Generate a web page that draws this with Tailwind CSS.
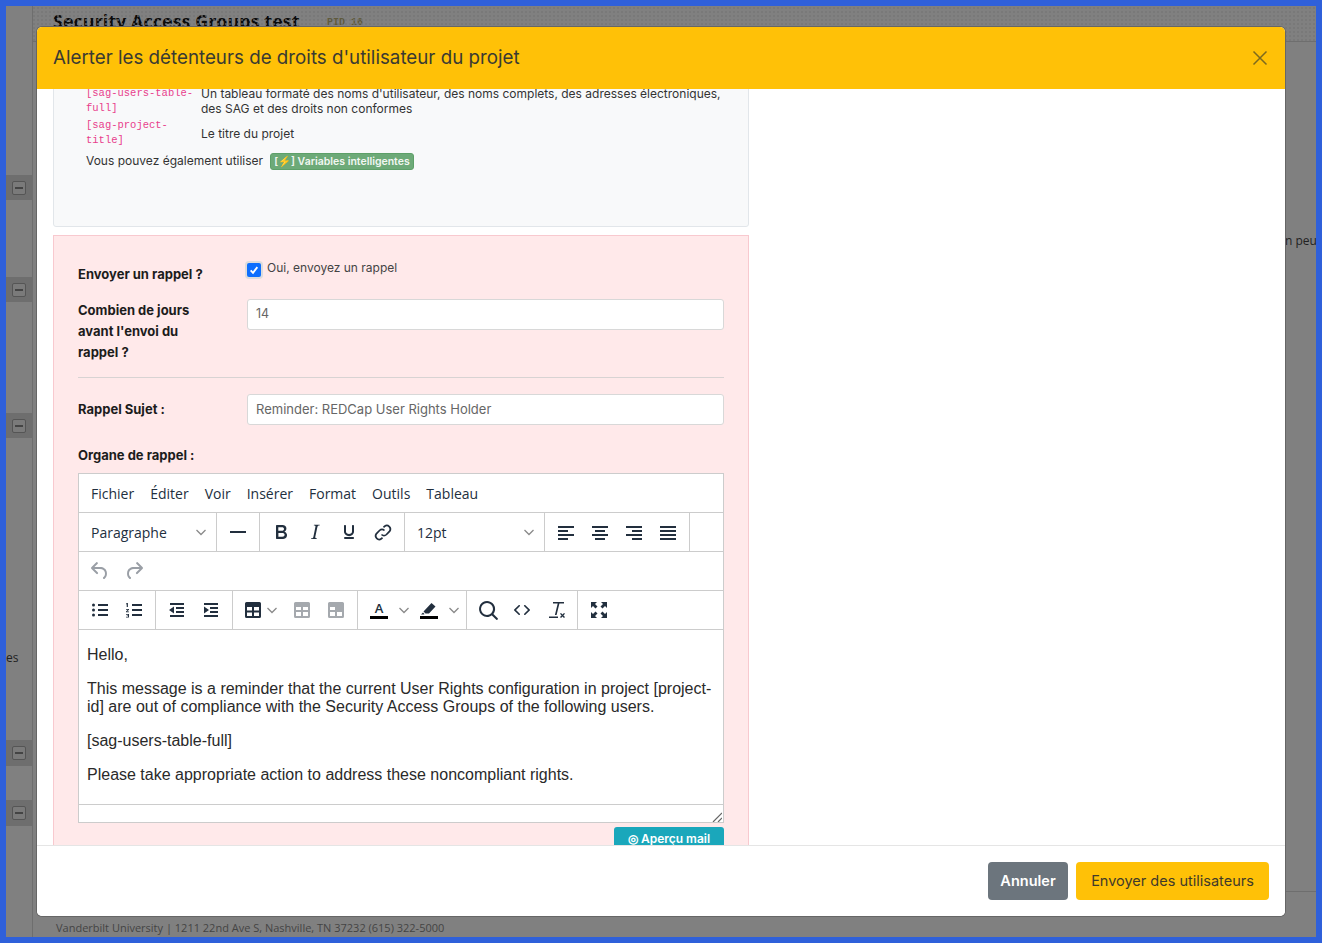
<!DOCTYPE html>
<html lang="fr">
<head>
  <meta charset='utf-8'>
  <meta name='viewport' content='width=device-width,initial-scale=1'>
  <title>Alerter les détenteurs de droits</title>
  <script src="https://cdn.jsdelivr.net/npm/@tailwindcss/browser@4"></script>
</head>
<body class="m-0 overflow-hidden bg-[#2f60da]">
  <div class="h-[943px] w-[1322px] p-[6px] font-['Inter',sans-serif]">
    <!-- dimmed page behind the dialog -->
    <div class="relative h-[931px] w-[1310px] overflow-hidden bg-[#808080]">
      <div class="absolute left-[26px] top-0 bottom-0 w-px bg-[#6e6e6e]"></div>
      <div class="absolute left-[26px] top-[35px] right-0 h-px bg-[#6e6e6e]"></div>
      <div class="absolute left-[47px] top-[3px] font-['Open_Sans',sans-serif] text-[18px] leading-[24px] font-bold text-[#0c0c0c]">Security Access Groups test</div>
      <div class="absolute left-[321px] top-[10px] font-['Liberation_Mono',monospace] text-[10px] leading-[14px] font-bold text-[#5f5a3c]">PID 16</div>
      <div class="absolute left-[26px] right-0 top-0 h-[35px] bg-[radial-gradient(#747474_1px,transparent_1px)] bg-[length:4px_4px] opacity-60"></div>

      <div class="absolute left-0 top-[169px] flex h-[25px] w-[26px] items-center justify-center bg-[#6e6e6e]"><span class="flex h-[14px] w-[14px] items-center justify-center rounded-[2px] border border-[#555] bg-[#7a7a7a]"><span class="h-[2px] w-[8px] bg-[#444]"></span></span></div>
      <div class="absolute left-0 top-[271px] flex h-[25px] w-[26px] items-center justify-center bg-[#6e6e6e]"><span class="flex h-[14px] w-[14px] items-center justify-center rounded-[2px] border border-[#555] bg-[#7a7a7a]"><span class="h-[2px] w-[8px] bg-[#444]"></span></span></div>
      <div class="absolute left-0 top-[407px] flex h-[25px] w-[26px] items-center justify-center bg-[#6e6e6e]"><span class="flex h-[14px] w-[14px] items-center justify-center rounded-[2px] border border-[#555] bg-[#7a7a7a]"><span class="h-[2px] w-[8px] bg-[#444]"></span></span></div>
      <div class="absolute left-0 top-[734px] flex h-[26px] w-[26px] items-center justify-center bg-[#6e6e6e]"><span class="flex h-[14px] w-[14px] items-center justify-center rounded-[2px] border border-[#555] bg-[#7a7a7a]"><span class="h-[2px] w-[8px] bg-[#444]"></span></span></div>
      <div class="absolute left-0 top-[794px] flex h-[26px] w-[26px] items-center justify-center bg-[#6e6e6e]"><span class="flex h-[14px] w-[14px] items-center justify-center rounded-[2px] border border-[#555] bg-[#7a7a7a]"><span class="h-[2px] w-[8px] bg-[#444]"></span></span></div>

      <div class="absolute left-0 top-[644px] font-['Open_Sans',sans-serif] text-[12px] leading-[16px] text-[#222]">es</div>
      <div class="absolute left-[1279px] top-[227px] whitespace-nowrap font-['Open_Sans',sans-serif] text-[12px] leading-[16px] text-[#222]">n peu</div>
      <div class="absolute left-[1279px] right-0 top-[885px] h-px bg-[#6e6e6e]"></div>

      <div class="absolute left-[50px] top-[909px] flex h-[2px] gap-[17px]">
        <span class="h-[2px] w-[126px] bg-black"></span><span class="h-[2px] w-[73px] bg-black"></span><span class="h-[2px] w-[33px] bg-black"></span><span class="h-[2px] w-[33px] bg-black"></span><span class="h-[2px] w-[71px] bg-black"></span><span class="h-[2px] w-[30px] bg-black"></span>
      </div>
      <div class="absolute left-[50px] top-[914px] whitespace-nowrap font-['Open_Sans',sans-serif] text-[11px] leading-[15px] text-[#444]">Vanderbilt University | 1211 22nd Ave S, Nashville, TN 37232 (615) 322-5000</div>

      <!-- dialog -->
      <div class="absolute left-[31px] top-[21px] flex h-[889px] w-[1248px] flex-col overflow-hidden rounded-[5px] bg-white shadow-[0_0_0_1px_#666]">
        <div class="flex h-[62px] shrink-0 items-center justify-between bg-[#ffc107] pl-[16px] pr-[17px]">
          <h5 class="text-[18.75px] leading-[24px] font-normal text-[#3a3a32]">Alerter les détenteurs de droits d'utilisateur du projet</h5>
          <svg class="h-[16px] w-[16px]" viewBox="0 0 16 16" fill="none" stroke="#7d6a1e" stroke-width="1.5"><path d="M1.5 1.5l13 13M14.5 1.5l-13 13"/></svg>
        </div>

        <div class="h-[756px] shrink-0 overflow-hidden px-[16px]">
          <!-- smart variables panel, scrolled -->
          <div class="mt-[-40px] h-[178px] w-[696px] rounded-[3px] border border-[#e2e6ea] bg-[#f8f9fa] pl-[32px] pr-[24px] pt-[35px]">
            <div class="flex h-[32px] items-center">
              <code class="w-[115px] shrink-0 font-['Liberation_Mono',monospace] text-[10.5px] leading-[15px] text-[#e83e8c]">[sag-users-table-full]</code>
              <span class="text-[12px] leading-[15px] text-[#333]">Un tableau formaté des noms d'utilisateur, des noms complets, des adresses électroniques, des SAG et des droits non conformes</span>
            </div>
            <div class="flex h-[32px] items-center">
              <code class="w-[115px] shrink-0 font-['Liberation_Mono',monospace] text-[10.5px] leading-[15px] text-[#e83e8c]">[sag-project-title]</code>
              <span class="text-[12px] leading-[15px] text-[#333]">Le titre du projet</span>
            </div>
            <div class="mt-[3px] flex items-center text-[12px] leading-[18px] text-[#333]">
              Vous pouvez également utiliser
              <span class="ml-[7px] rounded-[3px] border border-[#5da068] bg-[#6daa78] px-[3px] text-[10.5px] leading-[15px] font-semibold text-[#f2f7f2]">[⚡] Variables intelligentes</span>
            </div>
          </div>

          <!-- reminder form -->
          <div class="mt-[8px] h-[640px] w-[696px] border border-[#f8c9cf] bg-[#ffe9ea] px-[24px] pt-[24px]">
            <div class="flex">
              <div class="w-[169px] pt-[4px] text-[13px] leading-[21px] font-bold text-[#1c1c1c]">Envoyer un rappel ?</div>
              <label class="flex items-start text-[12px] leading-[18px] text-[#444]">
                <span class="flex h-[14px] w-[14px] items-center justify-center rounded-[2px] bg-[#0d6efd] shadow-[0_0_0_2px_#dcdcdc] mt-[3px]"><svg class="h-[10px] w-[10px]" viewBox="0 0 12 12" fill="none" stroke="#fff" stroke-width="2.2"><path d="M2 6.5l2.8 3L10 2.5"/></svg></span>
                <span class="ml-[6px] mt-[-1px]">Oui, envoyez un rappel</span>
              </label>
            </div>
            <div class="mt-[14px] flex">
              <div class="w-[169px] pt-[1px] text-[13px] leading-[21px] font-bold text-[#1c1c1c]">Combien de jours<br>avant l'envoi du<br>rappel ?</div>
              <div class="flex h-[31px] w-[477px] items-center rounded-[3px] border border-[#d8d8d8] bg-white px-[8px] text-[12.5px] text-[#666]">14</div>
            </div>
            <div class="mt-[14px] h-px w-[646px] bg-[#d8d3d3]"></div>
            <div class="mt-[16px] flex items-center">
              <div class="w-[169px] text-[13px] leading-[21px] font-bold text-[#1c1c1c]">Rappel Sujet :</div>
              <div class="flex h-[31px] w-[477px] items-center rounded-[3px] border border-[#d8d8d8] bg-white px-[8px] text-[13px] text-[#666]">Reminder: REDCap User Rights Holder</div>
            </div>
            <div class="mt-[20px] text-[13px] leading-[21px] font-bold text-[#1c1c1c]">Organe de rappel :</div>

            <!-- rich text editor -->
            <div class="mt-[7px] w-[646px] border border-[#ccc] bg-white font-['Open_Sans',sans-serif] text-[#222f3e]">
              <div class="flex h-[38px] items-center gap-[16px] pl-[12px] text-[14px]">
                <span>Fichier</span><span>Éditer</span><span>Voir</span><span>Insérer</span><span>Format</span><span>Outils</span><span>Tableau</span>
              </div>
              <!-- row 1 -->
              <div class="flex h-[39px] border-t border-[#ccc]">
                <div class="flex w-[138px] items-center justify-between border-r border-[#ccc] pl-[12px] pr-[10px] text-[14px]">Paragraphe
                  <svg class="h-[10px] w-[10px]" viewBox="0 0 10 10" fill="none" stroke="#8a8a8a" stroke-width="1.3"><path d="M0.5 3l4.5 4.5L9.5 3"/></svg>
                </div>
                <div class="flex w-[43px] items-center justify-center border-r border-[#ccc]"><span class="h-[2px] w-[16px] bg-[#222f3e]"></span></div>
                <div class="flex items-center border-r border-[#ccc] px-[4px]">
                  <span class="flex w-[34px] justify-center"><svg class="h-[24px] w-[24px]" viewBox="0 0 24 24" fill="#222f3e"><path d="M7.8 19c-.3 0-.5 0-.6-.2l-.2-.5V5.7c0-.2 0-.4.2-.5l.6-.2h5c1.5 0 2.7.3 3.5 1 .7.6 1.1 1.4 1.1 2.5a3 3 0 0 1-.6 1.9c-.4.6-1 1-1.6 1.2.4.1.9.3 1.3.6s.8.7 1 1.2c.4.4.5 1 .5 1.6 0 1.3-.4 2.3-1.3 3-.8.7-2.1 1-3.8 1H7.8zm5-8.3c.6 0 1.2-.1 1.6-.5.4-.3.6-.7.6-1.3 0-1.1-.8-1.7-2.3-1.7H9.3v3.5h3.4zm.5 6c.7 0 1.3-.1 1.7-.4.4-.4.6-.9.6-1.5s-.2-1-.7-1.4c-.4-.3-1-.4-2-.4H9.4v3.8h4z"/></svg></span>
                  <span class="flex w-[34px] justify-center"><svg class="h-[24px] w-[24px]" viewBox="0 0 24 24" fill="#222f3e"><path d="M16.7 4.7l-.1.9h-.3c-.6 0-1 0-1.4.3-.3.3-.4.6-.5 1.1l-2.1 9.8v.6c0 .5.4.8 1.4.8h.2l-.2.8H8l.2-.8h.2c1.1 0 1.8-.5 2-1.5l2-9.8.1-.5c0-.6-.4-.8-1.4-.8h-.3l.2-.9h5.8z"/></svg></span>
                  <span class="flex w-[34px] justify-center"><svg class="h-[24px] w-[24px]" viewBox="0 0 24 24" fill="#222f3e"><path d="M16 5c.6 0 1 .4 1 1v5.5a4 4 0 0 1-.4 1.8l-1 1.4a5.3 5.3 0 0 1-5.5 1 5 5 0 0 1-1.6-1c-.5-.4-.8-.9-1.1-1.4a4 4 0 0 1-.4-1.8V6c0-.6.4-1 1-1s1 .4 1 1v5.5c0 .3 0 .6.2 1l.6.7a3.3 3.3 0 0 0 2.2.8 3.4 3.4 0 0 0 2.2-.8c.3-.2.4-.5.6-.8l.2-.9V6c0-.6.4-1 1-1zM8 17h8c.6 0 1 .4 1 1s-.4 1-1 1H8a1 1 0 0 1 0-2z"/></svg></span>
                  <span class="flex w-[34px] justify-center"><svg class="h-[24px] w-[24px]" viewBox="0 0 24 24" fill="none" stroke="#222f3e" stroke-width="1.7"><path d="M10.5 14.5a3.6 3.6 0 0 0 5 0l3.2-3.3a3.6 3.6 0 0 0-5-5l-1.2 1.2"/><path d="M13.5 10.5a3.6 3.6 0 0 0-5 0l-3.2 3.3a3.6 3.6 0 0 0 5 5l1.2-1.2"/></svg></span>
                </div>
                <div class="flex w-[140px] items-center justify-between border-r border-[#ccc] pl-[12px] pr-[10px] text-[14px]">12pt
                  <svg class="h-[10px] w-[10px]" viewBox="0 0 10 10" fill="none" stroke="#8a8a8a" stroke-width="1.3"><path d="M0.5 3l4.5 4.5L9.5 3"/></svg>
                </div>
                <div class="flex items-center border-r border-[#ccc] px-[4px]">
                  <span class="flex w-[34px] justify-center"><svg class="h-[24px] w-[24px]" viewBox="0 0 24 24" fill="#222f3e"><path d="M4 6h16v2H4zM4 10h10v2H4zM4 14h16v2H4zM4 18h10v2H4z"/></svg></span>
                  <span class="flex w-[34px] justify-center"><svg class="h-[24px] w-[24px]" viewBox="0 0 24 24" fill="#222f3e"><path d="M4 6h16v2H4zM7 10h10v2H7zM4 14h16v2H4zM7 18h10v2H7z"/></svg></span>
                  <span class="flex w-[34px] justify-center"><svg class="h-[24px] w-[24px]" viewBox="0 0 24 24" fill="#222f3e"><path d="M4 6h16v2H4zM10 10h10v2H10zM4 14h16v2H4zM10 18h10v2H10z"/></svg></span>
                  <span class="flex w-[34px] justify-center"><svg class="h-[24px] w-[24px]" viewBox="0 0 24 24" fill="#222f3e"><path d="M4 6h16v2H4zM4 10h16v2H4zM4 14h16v2H4zM4 18h16v2H4z"/></svg></span>
                </div>
              </div>
              <!-- row 2 -->
              <div class="flex h-[39px] items-center border-t border-[#ccc] px-[4px]">
                <span class="flex w-[34px] justify-center"><svg class="h-[24px] w-[24px]" viewBox="0 0 24 24" fill="#9a9fa6"><path d="M6.4 8H12c3.7 0 6.2 2 6.8 5.1.6 2.7-.4 5.6-2.3 6.8a1 1 0 0 1-1-1.8c1.1-.7 1.8-2.7 1.4-4.6-.5-2.1-2.1-3.5-4.9-3.5H6.4l3.3 3.3a1 1 0 1 1-1.4 1.4l-5-5a1 1 0 0 1 0-1.4l5-5a1 1 0 0 1 1.4 1.4L6.4 8z"/></svg></span>
                <span class="flex w-[34px] justify-center"><svg class="h-[24px] w-[24px] -scale-x-100" viewBox="0 0 24 24" fill="#9a9fa6"><path d="M6.4 8H12c3.7 0 6.2 2 6.8 5.1.6 2.7-.4 5.6-2.3 6.8a1 1 0 0 1-1-1.8c1.1-.7 1.8-2.7 1.4-4.6-.5-2.1-2.1-3.5-4.9-3.5H6.4l3.3 3.3a1 1 0 1 1-1.4 1.4l-5-5a1 1 0 0 1 0-1.4l5-5a1 1 0 0 1 1.4 1.4L6.4 8z"/></svg></span>
              </div>
              <!-- row 3 -->
              <div class="flex h-[39px] border-t border-[#ccc]">
                <div class="flex items-center border-r border-[#ccc] px-[4px]">
                  <span class="flex w-[34px] justify-center"><svg class="h-[24px] w-[24px]" viewBox="0 0 24 24" fill="#222f3e"><path d="M10 6h10v2H10zM10 11h10v2H10zM10 16h10v2H10z"/><circle cx="5.5" cy="7" r="1.5"/><circle cx="5.5" cy="12" r="1.5"/><circle cx="5.5" cy="17" r="1.5"/></svg></span>
                  <span class="flex w-[34px] justify-center"><svg class="h-[24px] w-[24px]" viewBox="0 0 24 24" fill="#222f3e"><path d="M10 6h10v2H10zM10 11h10v2H10zM10 16h10v2H10zM4.5 5h1.4v4H4.7V6.200H4zM4 11h3v.8l-1.800 1.700H7v.8H4v-.8l1.800-1.700H4zM4 16h3v3.500H4v-.8h2v-.6H4.800v-.7H6v-.6H4z"/></svg></span>
                </div>
                <div class="flex items-center border-r border-[#ccc] px-[4px]">
                  <span class="flex w-[34px] justify-center"><svg class="h-[24px] w-[24px]" viewBox="0 0 24 24" fill="#222f3e"><path d="M5 5h14v2H5zM11 9h8v2h-8zM11 13h8v2h-8zM5 17h14v2H5zM9 8.500v7L4 12z"/></svg></span>
                  <span class="flex w-[34px] justify-center"><svg class="h-[24px] w-[24px]" viewBox="0 0 24 24" fill="#222f3e"><path d="M5 5h14v2H5zM11 9h8v2h-8zM11 13h8v2h-8zM5 17h14v2H5zM5 8.500v7L10 12z"/></svg></span>
                </div>
                <div class="flex items-center border-r border-[#ccc] pl-[3px] pr-[4px]">
                  <span class="flex w-[49px] items-center pl-[5px]"><svg class="h-[24px] w-[24px] shrink-0" viewBox="0 0 24 24" fill="#222f3e"><path fill-rule="evenodd" d="M5.500 4h13A1.500 1.500 0 0 1 20 5.500v13a1.500 1.500 0 0 1-1.500 1.500h-13A1.500 1.500 0 0 1 4 18.500v-13A1.500 1.500 0 0 1 5.500 4zM6 9v3.500h5V9zm7 0v3.500h5V9zM6 14.500V18h5v-3.500zm7 0V18h5v-3.500z"/></svg><svg class="ml-[2px] h-[10px] w-[10px]" viewBox="0 0 10 10" fill="none" stroke="#8a8a8a" stroke-width="1.3"><path d="M0.500 3l4.500 4.500L9.500 3"/></svg></span>
                  <span class="flex w-[34px] justify-center"><svg class="h-[24px] w-[24px]" viewBox="0 0 24 24" fill="#a5a9ae"><path fill-rule="evenodd" d="M5.500 4h13A1.500 1.500 0 0 1 20 5.500v13a1.500 1.500 0 0 1-1.500 1.500h-13A1.500 1.500 0 0 1 4 18.500v-13A1.500 1.500 0 0 1 5.500 4zM6 9v3h5V9zm7 0v3h5V9zM6 14v4h5v-4zm7 0v4h5v-4z"/></svg></span>
                  <span class="flex w-[34px] justify-center"><svg class="h-[24px] w-[24px]" viewBox="0 0 24 24" fill="#a5a9ae"><path fill-rule="evenodd" d="M5.500 4h13A1.500 1.500 0 0 1 20 5.500v13a1.500 1.500 0 0 1-1.500 1.500h-13A1.500 1.500 0 0 1 4 18.500v-13A1.500 1.500 0 0 1 5.500 4zM6 9v3h5V9zM6 14v4h5v-4zm7 0v4h5v-4z"/></svg></span>
                </div>
                <div class="flex items-center border-r border-[#ccc] pl-[4px] pr-[4px]">
                  <span class="flex w-[50px] items-center pl-[5px]"><span class="flex w-[24px] flex-col items-center"><span class="text-[13px] leading-[13px] font-semibold">A</span><span class="mt-[1px] h-[3px] w-[18px] bg-black"></span></span><svg class="ml-[8px] h-[10px] w-[10px]" viewBox="0 0 10 10" fill="none" stroke="#8a8a8a" stroke-width="1.3"><path d="M0.500 3l4.500 4.500L9.500 3"/></svg></span>
                  <span class="flex w-[50px] items-center pl-[5px]"><span class="flex w-[24px] flex-col items-center"><svg class="h-[13px] w-[18px]" viewBox="0 0 18 13" fill="#222f3e"><path d="M11.500 1l4 3.500-6.500 7H5.500L3.500 9.500zM1 12.500l2-2 1.500 1.500-.5.500z"/></svg><span class="mt-[1px] h-[3px] w-[18px] bg-black"></span></span><svg class="ml-[8px] h-[10px] w-[10px]" viewBox="0 0 10 10" fill="none" stroke="#8a8a8a" stroke-width="1.3"><path d="M0.500 3l4.500 4.500L9.500 3"/></svg></span>
                </div>
                <div class="flex items-center border-r border-[#ccc] px-[4px]">
                  <span class="flex w-[34px] justify-center"><svg class="h-[24px] w-[24px]" viewBox="0 0 24 24" fill="#222f3e"><path d="M16 17.300a8 8 0 1 1 1.400-1.400l4.300 4.400a1 1 0 0 1-1.400 1.400l-4.400-4.300zm-5-.3a6 6 0 1 0 0-12 6 6 0 0 0 0 12z"/></svg></span>
                  <span class="flex w-[34px] justify-center"><svg class="h-[24px] w-[24px]" viewBox="0 0 24 24" fill="#222f3e"><path d="M9.800 15.700c.3.300.3.800 0 1-.3.400-.9.400-1.200 0l-4.400-4.100a.8.800 0 0 1 0-1.200l4.400-4.200c.3-.3.900-.3 1.200 0 .3.300.3.800 0 1.100L6 12l3.800 3.700zm4.400 0L18 12l-3.800-3.700a.7.700 0 0 1 0-1.100c.3-.3.900-.3 1.200 0l4.400 4.200c.3.300.3.900 0 1.200l-4.400 4.100c-.3.400-.9.400-1.200 0a.8.800 0 0 1 0-1z"/></svg></span>
                  <span class="flex w-[34px] justify-center"><svg class="h-[24px] w-[24px]" viewBox="0 0 24 24" fill="#222f3e"><path d="M9 4h11v1.600h-4.600L12.600 17h-1.700l2.800-11.400H9zM5 18.500h9V20H5zM16 15.800l1-.9 1.500 1.500 1.500-1.500 1 .9-1.600 1.600 1.600 1.600-1 .9-1.500-1.500-1.500 1.500-1-.9 1.600-1.600z"/></svg></span>
                </div>
                <div class="flex items-center px-[4px]">
                  <span class="flex w-[34px] justify-center"><svg class="h-[24px] w-[24px]" viewBox="0 0 24 24" fill="#222f3e"><path d="M4 4h6l-2 2 2.500 2.500-2 2L6 8l-2 2zM20 4v6l-2-2-2.500 2.500-2-2L16 6l-2-2zM4 20v-6l2 2 2.500-2.500 2 2L8 18l2 2zM20 20h-6l2-2-2.500-2.500 2-2L18 16l2-2z"/></svg></span>
                </div>
              </div>
              <!-- content -->
              <div class="h-[175px] border-t border-[#ccc] px-[8px] pt-[16px] font-['Liberation_Sans',sans-serif] text-[16px] leading-[18px] text-[#2a2a2a]">
                <p>Hello,</p>
                <p class="mt-[16px]">This message is a reminder that the current User Rights configuration in project [project-id] are out of compliance with the Security Access Groups of the following users.</p>
                <p class="mt-[16px]">[sag-users-table-full]</p>
                <p class="mt-[16px]">Please take appropriate action to address these noncompliant rights.</p>
              </div>
              <!-- status bar -->
              <div class="flex h-[18px] items-end justify-end border-t border-[#ccc] pr-px">
                <svg class="h-[10px] w-[10px]" viewBox="0 0 10 10" stroke="#666" stroke-width="1.200"><path d="M1 10L10 1M6 10l4-4"/></svg>
              </div>
            </div>
            <div class="mt-[4px] flex w-[646px] justify-end">
              <span class="flex h-[24px] w-[110px] items-center justify-center gap-[4px] rounded-[3px] bg-[#1aa7bb] text-[12px] font-semibold text-white">◎ Aperçu mail</span>
            </div>
          </div>
        </div>

        <div class="flex h-[71px] shrink-0 items-center justify-end gap-[8px] border-t border-[#e5e5e5] bg-white pr-[16px]">
          <span class="flex h-[38px] w-[80px] items-center justify-center rounded-[4px] bg-[#6c757d] text-[14.5px] font-semibold text-white">Annuler</span>
          <span class="flex h-[38px] w-[193px] items-center justify-center rounded-[4px] bg-[#ffc107] text-[14.5px] text-[#3f3a2a]">Envoyer des utilisateurs</span>
        </div>
      </div>
    </div>
  </div>
</body>
</html>
